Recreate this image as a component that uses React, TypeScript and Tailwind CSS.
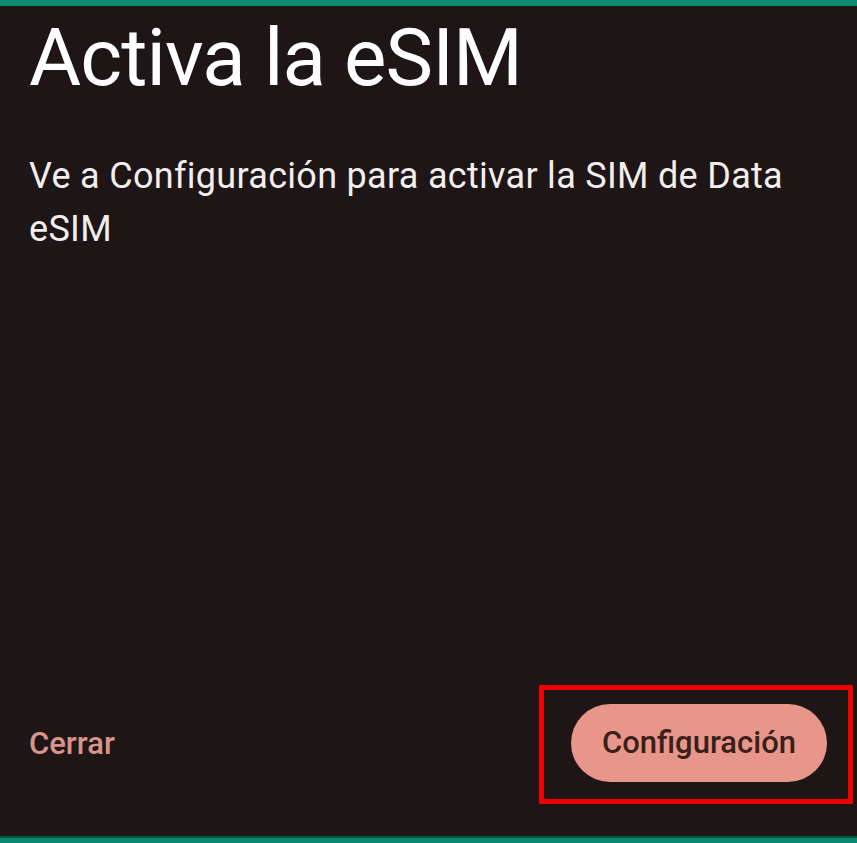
import React from 'react';

export default function App() {
    return (
        <div className="flex flex-col h-[843px] w-[857px] bg-[#1e1616] font-['Roboto',sans-serif] overflow-hidden">
            <div className="h-[6px] bg-[#0a8b6f]" />
            <div className="flex-1 flex flex-col px-[29px]">
                <h1 className="mt-[12px] text-[80px] leading-none text-white tracking-[-0.9px]">Activa la eSIM</h1>
                <p className="mt-[52px] max-w-[780px] text-[36px] leading-[53px] tracking-[0.3px] text-[#f2eeee]">
                    Ve a Configuración para activar la SIM de Data eSIM
                </p>
                <div className="mt-auto mb-[32px] flex items-center justify-between">
                    <button className="text-[31px] font-medium text-[#d8948a]">Cerrar</button>
                    <div className="border-[5px] border-[#ee0000] pl-[27px] pr-[21px] pt-[14px] pb-[17px] -mr-[25px]">
                        <button className="h-[78px] px-[31px] rounded-full bg-[#e9968a] text-[31px] font-medium text-[#3b1f1b]">
                            Configuración
                        </button>
                    </div>
                </div>
            </div>
            <div className="h-[7px] bg-[#0a8b6f] border-t-2 border-[#05553f]" />
        </div>
    );
}
